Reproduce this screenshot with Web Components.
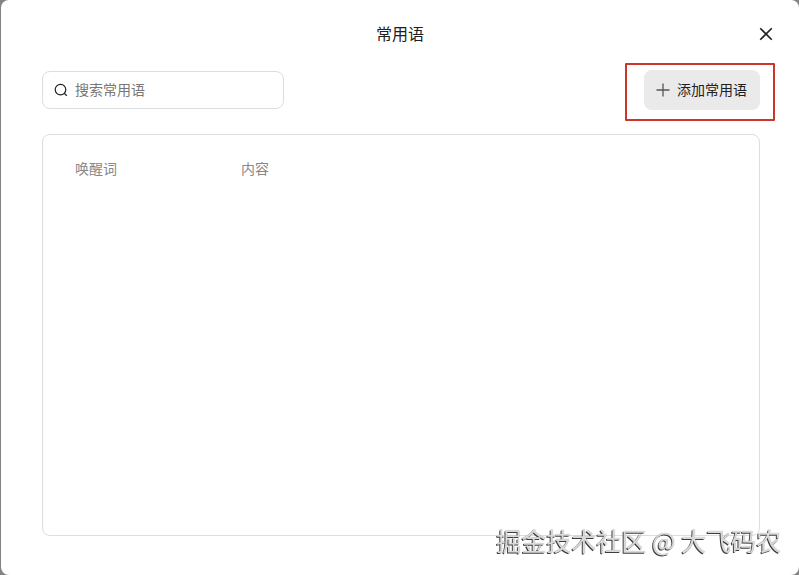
<!DOCTYPE html>
<html lang="zh-CN">
<head>
<meta charset="UTF-8">
<meta name="viewport" content="width=device-width, initial-scale=1">
<title>常用语</title>
<style>
  body {
    margin: 0;
    background: #848284;
    color: #1f2023;
    font-family: "Noto Sans CJK SC", sans-serif;
    font-size: 14px;
    line-height: 20px;
  }
</style>
</head>
<body>
<phrase-dialog>
  <span slot="title">常用语</span>
  <phrase-search slot="toolbar" placeholder="搜索常用语"></phrase-search>
  <add-button slot="toolbar" marked>添加常用语</add-button>
  <phrase-table columns="唤醒词,内容"></phrase-table>
</phrase-dialog>
<water-mark>掘金技术社区 @ 大飞码农</water-mark>

<script>
// Dialog frame: title bar, toolbar and body
class PhraseDialog extends HTMLElement {
  static Styles = /* Css */`
    :host {
      display: flex;
      flex-direction: column;
      box-sizing: border-box;
      min-height: 100vh;
      margin-left: 1px;
      padding: 0 39px 39px 41px;
      border-radius: 8px;
      background: #fff;
    }
    header {
      display: grid;
      grid-template-columns: 1fr auto 1fr;
      align-items: center;
      height: 68px;
      margin: 0 -39px 2px -41px;
      padding: 0 21px;
    }
    h1 {
      grid-column: 2;
      margin: 0;
      padding: 0 0 2px;
      font-size: 16px;
      font-weight: 400;
      line-height: 24px;
    }
    button {
      display: flex;
      justify-self: end;
      padding: 5px;
      border: 0;
      background: none;
      color: inherit;
    }
    .toolbar {
      display: flex;
      align-items: center;
      justify-content: space-between;
      margin-bottom: 24px;
    }
    main {
      display: flex;
      flex: 1;
    }
  `

  constructor () {
    super()
    this.attachShadow({ mode: 'open' })
  }

  connectedCallback () {
    this.shadowRoot.innerHTML = /* HTML */`
      <style>${PhraseDialog.Styles}</style>
      <header>
        <h1><slot name="title"></slot></h1>
        <button type="button" aria-label="关闭">
          <svg width="14" height="14" viewBox="0 0 14 14" fill="none" stroke="currentColor" stroke-width="1.6">
            <path d="M1.2 1.2 12.8 12.8M12.8 1.2 1.2 12.8"/>
          </svg>
        </button>
      </header>
      <div class="toolbar"><slot name="toolbar"></slot></div>
      <main><slot></slot></main>
    `
  }
}

// Search box with a leading icon
class PhraseSearch extends HTMLElement {
  static Styles = /* Css */`
    :host {
      display: block;
      width: 242px;
    }
    label {
      display: flex;
      align-items: center;
      gap: 7px;
      box-sizing: border-box;
      height: 38px;
      padding: 0 11px;
      border: 1px solid #dcdddd;
      border-radius: 8px;
    }
    svg {
      flex: none;
    }
    input {
      flex: 1;
      min-width: 0;
      padding: 0 0 2px;
      border: 0;
      outline: 0;
      background: none;
      color: inherit;
      font: inherit;
    }
    input::placeholder {
      color: #777;
      opacity: 1;
    }
  `

  constructor () {
    super()
    this.attachShadow({ mode: 'open' })
  }

  connectedCallback () {
    const text = this.getAttribute('placeholder')
    this.shadowRoot.innerHTML = /* HTML */`
      <style>${PhraseSearch.Styles}</style>
      <label>
        <svg width="14" height="14" viewBox="0 0 14 14" fill="none" stroke="currentColor" stroke-width="1.2">
          <circle cx="6.5" cy="6.6" r="5.3"/>
          <path d="m10.2 10.3 2.6 2.5"/>
        </svg>
        <input type="text" placeholder="${text}" aria-label="${text}">
      </label>
    `
  }
}

// Add button, "marked" draws the red frame around it
class AddButton extends HTMLElement {
  static Styles = /* Css */`
    :host {
      display: block;
      position: relative;
    }
    :host([marked])::after {
      content: "";
      position: absolute;
      inset: -7px -15px -11px -19px;
      border: 2px solid #cb362b;
      border-radius: 1px;
      pointer-events: none;
    }
    button {
      display: flex;
      align-items: center;
      gap: 7px;
      height: 40px;
      padding: 0 13px 0 12px;
      border: 0;
      border-radius: 8px;
      background: #eaeaea;
      color: inherit;
      font: inherit;
    }
    span {
      padding-bottom: 2px;
    }
  `

  constructor () {
    super()
    this.attachShadow({ mode: 'open' })
  }

  connectedCallback () {
    this.shadowRoot.innerHTML = /* HTML */`
      <style>${AddButton.Styles}</style>
      <button type="button">
        <svg width="14" height="14" viewBox="0 0 14 14" fill="none" stroke="#555" stroke-width="1.3">
          <path d="M7 .5v13M.5 7h13"/>
        </svg>
        <span><slot></slot></span>
      </button>
    `
  }
}

// Bordered list of phrases, empty for now
class PhraseTable extends HTMLElement {
  static Styles = /* Css */`
    :host {
      display: block;
      flex: 1;
      box-sizing: border-box;
      padding: 23px 32px;
      border: 1px solid #dcdddd;
      border-radius: 8px;
    }
    table {
      width: 100%;
      border-collapse: collapse;
      table-layout: fixed;
    }
    th {
      padding: 0;
      color: #888;
      font-weight: 400;
      text-align: left;
    }
    th:first-child {
      width: 166px;
    }
  `

  constructor () {
    super()
    this.attachShadow({ mode: 'open' })
  }

  connectedCallback () {
    const columns = this.getAttribute('columns').split(',')
    this.shadowRoot.innerHTML = /* HTML */`
      <style>${PhraseTable.Styles}</style>
      <table>
        <thead>
          <tr>${columns.map(name => `<th scope="col">${name}</th>`).join('')}</tr>
        </thead>
        <tbody></tbody>
      </table>
    `
  }
}

// Watermark over the bottom right corner
class WaterMark extends HTMLElement {
  constructor () {
    super()
    this.attachShadow({ mode: 'open' })
  }

  connectedCallback () {
    this.shadowRoot.innerHTML = /* HTML */`
      <style>
        :host {
          position: absolute;
          right: 18px;
          bottom: 17px;
          color: #d8d8d8;
          font-size: 25px;
          line-height: 36px;
          white-space: nowrap;
          text-shadow: -1px 1px 0 #333, 0 0 1px #999;
          opacity: 0.95;
          will-change: opacity;
          pointer-events: none;
        }
      </style>
      <slot></slot>
    `
  }
}

customElements.define('phrase-dialog', PhraseDialog)
customElements.define('phrase-search', PhraseSearch)
customElements.define('add-button', AddButton)
customElements.define('phrase-table', PhraseTable)
customElements.define('water-mark', WaterMark)
</script>
</body>
</html>
